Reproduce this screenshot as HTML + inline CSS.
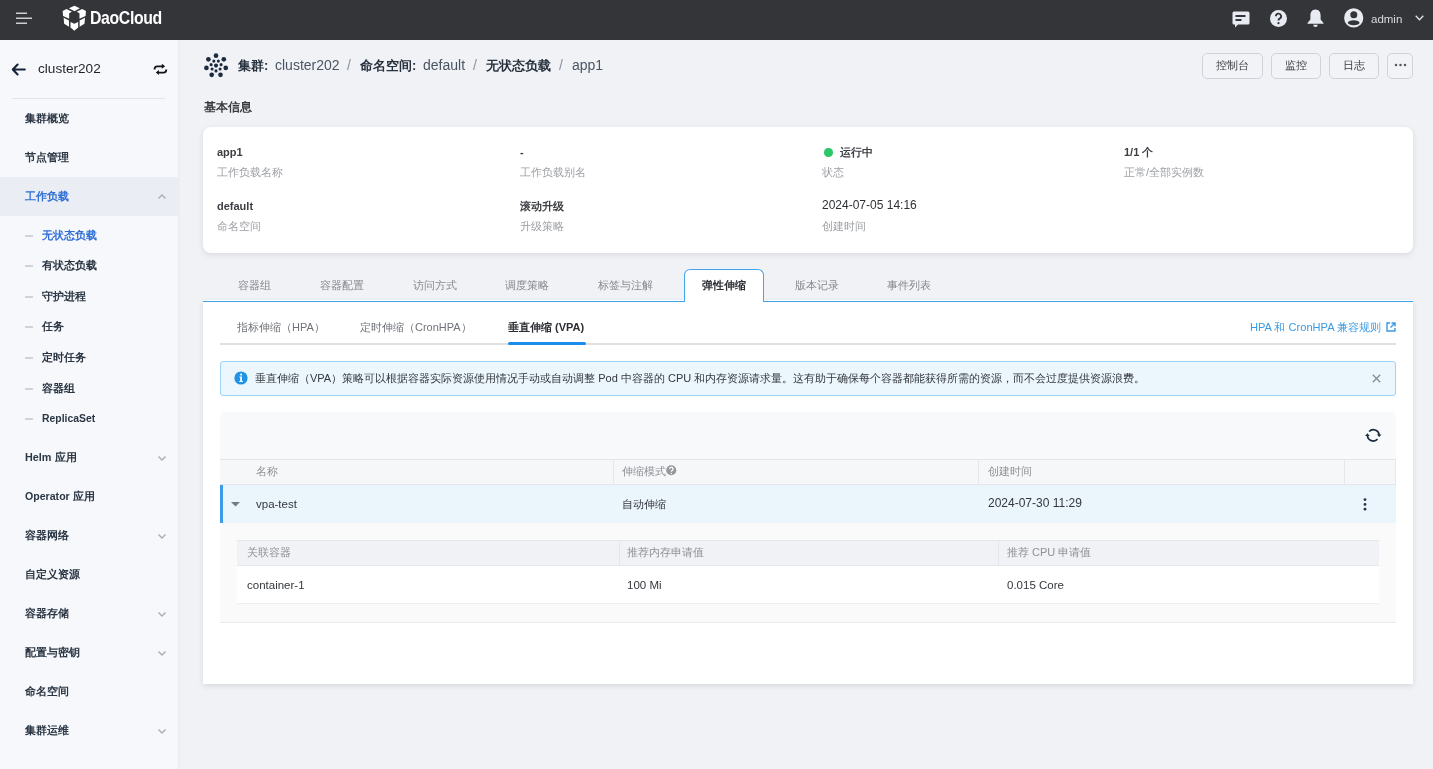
<!DOCTYPE html>
<html><head><meta charset="utf-8">
<style>
*{box-sizing:border-box;margin:0;padding:0}
body > *{will-change:transform}
html,body{width:1433px;height:769px;overflow:hidden}
body{-webkit-font-smoothing:antialiased;font-family:"Liberation Sans",sans-serif;background:#f1f2f6;position:relative;color:#2a2d33}
.abs{position:absolute;white-space:nowrap}
#top{position:absolute;left:0;top:0;width:1433px;height:40px;background:#343539}
#side{position:absolute;left:0;top:40px;width:178px;height:729px;background:#f7f8fb;box-shadow:1px 0 2px rgba(0,0,0,0.04)}
.nav{position:absolute;left:25px;font-size:11.2px;font-weight:700;color:#2b3644;line-height:14px}
.sub{position:absolute;left:42px;font-size:11.2px;font-weight:700;color:#2b3644;line-height:14px}
.dash{position:absolute;left:25px;width:8px;height:1.5px;background:#cfd2d9}
.chev{position:absolute;left:157.5px;width:8px;height:5px}
.card{position:absolute;background:#fff;border-radius:8px;box-shadow:0 2px 6px rgba(20,30,50,0.10)}
.val{position:absolute;font-size:11px;font-weight:700;color:#3c3e43;line-height:13px}
.lbl{position:absolute;font-size:11px;color:#9d9fa4;line-height:13px}
.tab{position:absolute;top:278px;font-size:11px;color:#85888e;line-height:14px}
.btn{position:absolute;top:53px;height:26px;border:1px solid #cdd2db;border-radius:5px;font-size:11px;color:#3a3d42;text-align:center;line-height:22px;background:#f2f3f7}
.bc{top:57px;font-size:14px;line-height:17px;color:#26313d}
.th{position:absolute;font-size:11px;color:#8f9196;line-height:13px}
.td{position:absolute;font-size:11.5px;color:#34373c;line-height:14px}
</style></head><body>

<!-- top bar -->
<div id="top">
  <svg class="abs" style="left:16px;top:12px" width="16" height="12" viewBox="0 0 16 12"><rect x="0" y="0.6" width="11" height="1.2" fill="#f4f5f7"/><rect x="0" y="5.6" width="16" height="1.2" fill="#f4f5f7"/><rect x="0" y="10.6" width="11" height="1.2" fill="#f4f5f7"/></svg>
  <svg class="abs" style="left:58px;top:2px" width="34" height="32" viewBox="0 0 817 769" fill="#fff">
    <path d="M395 88 L525 152 L395 222 L262 152 Z"/>
    <path d="M112 215 L205 168 L335 235 L268 272 L268 405 L122 338 Z"/>
    <path d="M672 215 L579 168 L449 235 L516 272 L516 405 L662 338 Z"/>
    <path d="M135 378 L265 442 L265 592 L148 522 Z"/>
    <path d="M649 378 L519 442 L519 592 L636 522 Z"/>
    <path d="M300 480 L392 522 L484 480 L484 612 L392 690 L300 612 Z"/>
  </svg>
  <div class="abs" style="left:90px;top:6.8px;font-size:18.4px;font-weight:700;color:#fff;letter-spacing:-0.4px;line-height:22px;transform:scaleX(0.86);transform-origin:0 0">DaoCloud</div>
  <!-- right icons -->
  <svg class="abs" style="left:1232px;top:11px" width="18" height="17" viewBox="0 0 18 17"><path d="M2 0.5 H16 A1.5 1.5 0 0 1 17.5 2 V12 A1.5 1.5 0 0 1 16 13.5 H6 L3 16.5 V13.5 H2 A1.5 1.5 0 0 1 0.5 12 V2 A1.5 1.5 0 0 1 2 0.5 Z" fill="#e8ebf2"/><rect x="3.5" y="4" width="10" height="2" fill="#343539"/><rect x="3.5" y="8" width="6" height="2" fill="#343539"/></svg>
  <svg class="abs" style="left:1270px;top:10px" width="17" height="17" viewBox="0 0 17 17"><circle cx="8.5" cy="8.5" r="8.5" fill="#e8ebf2"/><path d="M5.9 6.3 A2.6 2.6 0 1 1 9.6 8.6 C8.7 9.1 8.5 9.5 8.5 10.5" stroke="#343539" stroke-width="1.9" fill="none"/><circle cx="8.5" cy="13.2" r="1.1" fill="#343539"/></svg>
  <svg class="abs" style="left:1307px;top:9px" width="17" height="18" viewBox="0 0 17 18"><path d="M8.5 0.5 C12 0.5 13.6 3.4 13.6 6.5 V10.5 L16.5 14 V14.8 H0.5 V14 L3.4 10.5 V6.5 C3.4 3.4 5 0.5 8.5 0.5 Z" fill="#e8ebf2"/><path d="M6.3 15.8 H10.7 A2.2 2.2 0 0 1 6.3 15.8 Z" fill="#e8ebf2"/></svg>
  <svg class="abs" style="left:1344px;top:8px" width="20" height="20" viewBox="0 0 20 20"><circle cx="9.7" cy="9.9" r="9.6" fill="#e8ebf2"/><circle cx="9.8" cy="6.7" r="3.5" fill="#343539"/><ellipse cx="9.7" cy="14.7" rx="5.8" ry="2.5" fill="#343539"/></svg>
  <div class="abs" style="left:1371px;top:12px;font-size:11.5px;color:#d8dade;line-height:14px">admin</div>
  <svg class="abs" style="left:1415px;top:15px" width="9" height="6" viewBox="0 0 9 6"><path d="M0.7 0.7 L4.5 4.8 L8.3 0.7" stroke="#e0e2e6" stroke-width="1.3" fill="none"/></svg>
</div>

<!-- sidebar -->
<div id="side">
  <svg class="abs" style="left:11px;top:23px" width="15" height="13" viewBox="0 0 15 13"><path d="M13.8 6.5 H2.2 M6.6 1.6 L1.8 6.5 L6.6 11.4" stroke="#15253a" stroke-width="2.1" stroke-linecap="round" stroke-linejoin="round" fill="none"/></svg>
  <div class="abs" style="left:38px;top:20px;font-size:13.6px;color:#1e2227;line-height:17px">cluster202</div>
  <svg class="abs" style="left:148px;top:18px" width="24" height="22" viewBox="0 0 24 22"><path d="M6.5 11.4 C6.5 9.3 7.5 8.3 9.3 8.3 H14.5 M18.3 11.5 C18.3 13.6 17.3 14.6 15.5 14.6 H10.2" stroke="#111418" stroke-width="1.8" fill="none"/><path d="M13.8 5.8 L17.2 8.3 L13.8 10.8 Z M10.9 12.1 L7.8 14.6 L10.9 17.1 Z" fill="#111418"/></svg>
  <div class="abs" style="left:12px;top:58px;width:153px;height:1px;background:#e2e4e9"></div>
</div>
<div class="nav" style="top:111px">集群概览</div>
<div class="nav" style="top:150px">节点管理</div>
<div class="abs" style="left:0;top:177px;width:178px;height:39px;background:#eaedf3"></div>
<div class="nav" style="top:189px;color:#2f6fd6">工作负载</div>
<svg class="chev" style="top:194px" viewBox="0 0 8 5"><path d="M0.5 4.5 L4 1 L7.5 4.5" stroke="#a7acb6" stroke-width="1.4" fill="none"/></svg>
<div class="dash" style="top:235px"></div><div class="sub" style="top:228px;color:#2f6fd6">无状态负载</div>
<div class="dash" style="top:265px"></div><div class="sub" style="top:258px">有状态负载</div>
<div class="dash" style="top:296px"></div><div class="sub" style="top:289px">守护进程</div>
<div class="dash" style="top:326px"></div><div class="sub" style="top:319px">任务</div>
<div class="dash" style="top:357px"></div><div class="sub" style="top:350px">定时任务</div>
<div class="dash" style="top:388px"></div><div class="sub" style="top:381px">容器组</div>
<div class="dash" style="top:418px"></div><div class="sub" style="top:411px"><span style="font-size:10.4px">ReplicaSet</span></div>
<div class="nav" style="top:450px"><span style="font-size:10.8px">Helm</span> 应用</div>
<svg class="chev" style="top:456px" viewBox="0 0 8 5"><path d="M0.5 0.5 L4 4 L7.5 0.5" stroke="#a7acb6" stroke-width="1.4" fill="none"/></svg>
<div class="nav" style="top:489px"><span style="font-size:10.6px">Operator</span> 应用</div>
<div class="nav" style="top:528px">容器网络</div>
<svg class="chev" style="top:534px" viewBox="0 0 8 5"><path d="M0.5 0.5 L4 4 L7.5 0.5" stroke="#a7acb6" stroke-width="1.4" fill="none"/></svg>
<div class="nav" style="top:567px">自定义资源</div>
<div class="nav" style="top:606px">容器存储</div>
<svg class="chev" style="top:612px" viewBox="0 0 8 5"><path d="M0.5 0.5 L4 4 L7.5 0.5" stroke="#a7acb6" stroke-width="1.4" fill="none"/></svg>
<div class="nav" style="top:645px">配置与密钥</div>
<svg class="chev" style="top:651px" viewBox="0 0 8 5"><path d="M0.5 0.5 L4 4 L7.5 0.5" stroke="#a7acb6" stroke-width="1.4" fill="none"/></svg>
<div class="nav" style="top:684px">命名空间</div>
<div class="nav" style="top:723px">集群运维</div>
<svg class="chev" style="top:729px" viewBox="0 0 8 5"><path d="M0.5 0.5 L4 4 L7.5 0.5" stroke="#a7acb6" stroke-width="1.4" fill="none"/></svg>

<!-- breadcrumb -->
<svg class="abs" style="left:200px;top:50px" width="32" height="30" viewBox="0 0 32 30" fill="#1c2b3f">
  <circle cx="16" cy="5.66" r="2.35"/><circle cx="8.39" cy="9.37" r="2.35"/><circle cx="23.8" cy="9.37" r="2.35"/><circle cx="6.44" cy="17.95" r="2.35"/><circle cx="25.76" cy="17.95" r="2.35"/><circle cx="11.7" cy="24.78" r="2.35"/><circle cx="20.5" cy="24.78" r="2.35"/>
  <circle cx="13.85" cy="11.12" r="1.55"/><circle cx="18.34" cy="11.12" r="1.55"/><circle cx="11.12" cy="14.63" r="1.55"/><circle cx="21.07" cy="14.63" r="1.55"/><circle cx="12.1" cy="19.04" r="1.55"/><circle cx="20.1" cy="19.04" r="1.55"/><circle cx="16" cy="20.88" r="1.55"/>
  <circle cx="16" cy="15.6" r="2.05"/>
</svg>
<div class="abs bc" style="left:238px;font-weight:700;font-size:13px">集群:</div>
<div class="abs bc" style="left:275px;color:#4a5563">cluster202</div>
<div class="abs bc" style="left:347px;color:#8a929c">/</div>
<div class="abs bc" style="left:360px;font-weight:700;font-size:13px">命名空间:</div>
<div class="abs bc" style="left:423px;color:#4a5563">default</div>
<div class="abs bc" style="left:473px;color:#8a929c">/</div>
<div class="abs bc" style="left:486px;font-weight:700;font-size:13px">无状态负载</div>
<div class="abs bc" style="left:559px;color:#8a929c">/</div>
<div class="abs bc" style="left:572px;color:#4a5563">app1</div>

<div class="btn" style="left:1202px;width:61px">控制台</div>
<div class="btn" style="left:1271px;width:50px">监控</div>
<div class="btn" style="left:1329px;width:50px">日志</div>
<div class="btn" style="left:1387px;width:26px"><svg style="position:absolute;left:6px;top:8.5px" width="13" height="4" viewBox="0 0 13 4" fill="#55595f"><circle cx="2" cy="2" r="1.25"/><circle cx="6.5" cy="2" r="1.25"/><circle cx="11" cy="2" r="1.25"/></svg></div>

<div class="abs" style="left:204px;top:100px;font-size:11.8px;font-weight:700;color:#37393d;line-height:15px">基本信息</div>

<!-- info card -->
<div class="card" style="left:203px;top:127px;width:1210px;height:126px"></div>
<div class="val" style="left:217px;top:146px">app1</div>
<div class="lbl" style="left:217px;top:166px">工作负载名称</div>
<div class="val" style="left:520px;top:146px">-</div>
<div class="lbl" style="left:520px;top:166px">工作负载别名</div>
<div class="abs" style="left:824px;top:148px;width:8.5px;height:8.5px;border-radius:50%;background:#2cc767"></div>
<div class="val" style="left:840px;top:146px">运行中</div>
<div class="lbl" style="left:822px;top:166px">状态</div>
<div class="val" style="left:1124px;top:146px">1/1 个</div>
<div class="lbl" style="left:1124px;top:166px">正常/全部实例数</div>
<div class="val" style="left:217px;top:200px">default</div>
<div class="lbl" style="left:217px;top:220px">命名空间</div>
<div class="val" style="left:520px;top:200px">滚动升级</div>
<div class="lbl" style="left:520px;top:220px">升级策略</div>
<div class="val" style="left:822px;top:199px;font-weight:400;font-size:12px;color:#2e3034">2024-07-05 14:16</div>
<div class="lbl" style="left:822px;top:220px">创建时间</div>

<!-- tabs -->
<div class="abs" style="left:203px;top:300px;width:1210px;height:384px;background:#fff;box-shadow:0 2px 5px rgba(20,30,50,0.12)"></div>
<div class="abs" style="left:203px;top:300.5px;width:1210px;height:1.5px;background:#3ea2e8;will-change:auto"></div>
<div class="abs" style="left:684px;top:269px;width:80px;height:33px;background:#fff;border:1.8px solid #42a5ea;border-bottom:none;border-radius:6px 6px 0 0"></div>
<div class="tab" style="left:238px">容器组</div>
<div class="tab" style="left:320px">容器配置</div>
<div class="tab" style="left:413px">访问方式</div>
<div class="tab" style="left:505px">调度策略</div>
<div class="tab" style="left:598px">标签与注解</div>
<div class="tab" style="left:702px;color:#2b2e33;font-weight:700">弹性伸缩</div>
<div class="tab" style="left:795px">版本记录</div>
<div class="tab" style="left:887px">事件列表</div>

<!-- sub tabs -->
<div class="abs" style="left:220px;top:343px;width:1176px;height:2px;background:#dfe1e5"></div>
<div class="abs" style="left:508px;top:342px;width:78px;height:3px;border-radius:2px;background:#1a8cec"></div>
<div class="abs" style="left:237px;top:320px;font-size:11px;color:#6f7379;line-height:14px">指标伸缩（HPA）</div>
<div class="abs" style="left:360px;top:320px;font-size:11px;color:#6f7379;line-height:14px">定时伸缩（CronHPA）</div>
<div class="abs" style="left:508px;top:320px;font-size:11px;color:#2b2e33;font-weight:700;line-height:14px">垂直伸缩 (VPA)</div>
<div class="abs" style="left:1250px;top:320px;font-size:11.1px;color:#3a9be3;line-height:14px">HPA 和 CronHPA 兼容规则</div>
<svg class="abs" style="left:1386px;top:322px" width="10" height="10" viewBox="0 0 10 10"><path d="M4 1 H1 V9 H9 V6 M5.5 1 H9 V4.5 M9 1 L4.5 5.5" stroke="#3a9be3" stroke-width="1.4" fill="none"/></svg>

<!-- alert -->
<div class="abs" style="left:220px;top:361px;width:1176px;height:35px;background:#ebf6fd;border:1px solid #9ed2f4;border-radius:3px"></div>
<svg class="abs" style="left:234px;top:371px" width="14" height="14" viewBox="0 0 14 14"><circle cx="7" cy="7" r="6.6" fill="#1f93e6"/><circle cx="7.1" cy="3.6" r="1.05" fill="#fff"/><path d="M5.5 5.6 H7.9 V10 H8.9 V11 H5.2 V10 H6.2 V6.5 H5.5 Z" fill="#fff"/></svg>
<div class="abs" style="left:255px;top:371px;font-size:11px;color:#34373c;line-height:14px">垂直伸缩（VPA）策略可以根据容器实际资源使用情况手动或自动调整 Pod 中容器的 CPU 和内存资源请求量。这有助于确保每个容器都能获得所需的资源，而不会过度提供资源浪费。</div>
<svg class="abs" style="left:1372px;top:374px" width="9" height="9" viewBox="0 0 9 9"><path d="M0.8 0.8 L8.2 8.2 M8.2 0.8 L0.8 8.2" stroke="#8a8d92" stroke-width="1.3"/></svg>

<!-- table -->
<div class="abs" style="left:220px;top:412px;width:1176px;height:211px;background:#f8f9fb;border-radius:5px 5px 0 0"></div>
<svg class="abs" style="left:1360px;top:423px" width="28" height="24" viewBox="0 0 28 24"><path d="M9.1 8.5 A5.9 5.9 0 0 1 19.2 11.8 M17.5 16.2 A5.9 5.9 0 0 1 7.4 12.6" stroke="#1c2b3f" stroke-width="1.7" fill="none"/><path d="M16.9 11.4 H21.5 L19.2 14.1 Z M5.1 13 H9.7 L7.4 10.3 Z" fill="#1c2b3f"/></svg>
<div class="abs" style="left:220px;top:459px;width:1176px;height:26px;background:#f6f7f9;border-top:1px solid #e4e6ec;border-bottom:1px solid #e4e6ec"></div>
<div class="abs" style="left:613px;top:460px;width:1px;height:24px;background:#e4e6ec"></div>
<div class="abs" style="left:978px;top:460px;width:1px;height:24px;background:#e4e6ec"></div>
<div class="abs" style="left:1344px;top:460px;width:1px;height:24px;background:#e4e6ec"></div>
<div class="abs" style="left:1395px;top:460px;width:1px;height:24px;background:#e4e6ec"></div>
<div class="th" style="left:256px;top:465px">名称</div>
<div class="th" style="left:622px;top:465px">伸缩模式</div>
<svg class="abs" style="left:666px;top:464.5px" width="10.5" height="10.5" viewBox="0 0 11 11"><circle cx="5.5" cy="5.5" r="5.3" fill="#96989d"/><path d="M3.7 4.2 A1.85 1.85 0 1 1 6.3 5.9 C5.7 6.2 5.5 6.5 5.5 7.2" stroke="#fff" stroke-width="1.3" fill="none"/><circle cx="5.5" cy="8.8" r="0.75" fill="#fff"/></svg>
<div class="th" style="left:988px;top:465px">创建时间</div>

<div class="abs" style="left:220px;top:485px;width:1176px;height:38px;background:#eaf5fc"></div>
<div class="abs" style="left:220px;top:485px;width:2.5px;height:38px;background:#3d9be8"></div>
<svg class="abs" style="left:230.5px;top:501.5px" width="9" height="5" viewBox="0 0 9 5"><path d="M0 0 H9 L4.5 4.6 Z" fill="#767a82"/></svg>
<div class="td" style="left:256px;top:497px">vpa-test</div>
<div class="td" style="left:622px;top:497px;font-size:11px">自动伸缩</div>
<div class="td" style="left:988px;top:496px;font-size:12px">2024-07-30 11:29</div>
<svg class="abs" style="left:1363px;top:498px" width="4" height="13" viewBox="0 0 4 13" fill="#24344a"><circle cx="2" cy="1.6" r="1.4"/><circle cx="2" cy="6.4" r="1.4"/><circle cx="2" cy="11.2" r="1.4"/></svg>

<div class="abs" style="left:220px;top:523px;width:1176px;height:100px;background:#fafafa;border-bottom:1px solid #e8e9ec"></div>
<div class="abs" style="left:237px;top:540px;width:1142px;height:26px;background:#f0f2f5;border-top:1px solid #e6e8ec;border-bottom:1px solid #e3e6eb"></div>
<div class="abs" style="left:619px;top:541px;width:1px;height:24px;background:#e2e5ea"></div>
<div class="abs" style="left:998px;top:541px;width:1px;height:24px;background:#e2e5ea"></div>
<div class="abs" style="left:237px;top:566px;width:1142px;height:38px;background:#fff;border-bottom:1px solid #eceef1"></div>
<div class="th" style="left:247px;top:546px">关联容器</div>
<div class="th" style="left:627px;top:546px">推荐内存申请值</div>
<div class="th" style="left:1007px;top:546px">推荐 CPU 申请值</div>
<div class="td" style="left:247px;top:578px">container-1</div>
<div class="td" style="left:627px;top:578px">100 Mi</div>
<div class="td" style="left:1007px;top:578px">0.015 Core</div>

</body></html>
